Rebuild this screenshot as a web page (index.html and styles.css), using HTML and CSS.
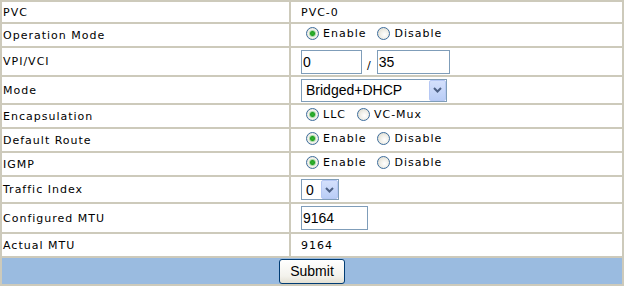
FILE: index.html
```html
<!DOCTYPE html>
<html lang="en">
<head>
  <meta charset="UTF-8">
  <title>PVC Settings</title>
  <link rel="stylesheet" href="styles.css">
</head>
<body>
  <form id="pvcForm">
    <table class="form-table">
      <colgroup>
        <col class="col-label">
        <col class="col-value">
      </colgroup>
      <tr class="row-text">
        <td class="label">PVC</td>
        <td class="value">PVC-0</td>
      </tr>
      <tr class="row-radio">
        <td class="label">Operation Mode</td>
        <td class="value">
          <label class="opt"><input type="radio" name="opmode" checked>Enable</label><label class="opt"><input type="radio" name="opmode">Disable</label>
        </td>
      </tr>
      <tr class="row-vpi">
        <td class="label">VPI/VCI</td>
        <td class="value">
          <input type="text" class="field vpi" value="0"><span class="sep">/</span><input type="text" class="field vci" value="35">
        </td>
      </tr>
      <tr class="row-mode">
        <td class="label">Mode</td>
        <td class="value">
          <span class="combo combo-mode">
            <select>
              <option selected>Bridged+DHCP</option>
              <option>Bridged</option>
              <option>Routed</option>
            </select>
            <span class="combo-btn"><svg width="9" height="6" viewBox="0 0 9 6"><path d="M1 1 L4.5 4.5 L8 1" fill="none" stroke="#4d6185" stroke-width="2"/></svg></span>
          </span>
        </td>
      </tr>
      <tr class="row-radio">
        <td class="label">Encapsulation</td>
        <td class="value">
          <label class="opt"><input type="radio" name="encap" checked>LLC</label><label class="opt"><input type="radio" name="encap">VC-Mux</label>
        </td>
      </tr>
      <tr class="row-radio">
        <td class="label">Default Route</td>
        <td class="value">
          <label class="opt"><input type="radio" name="route" checked>Enable</label><label class="opt"><input type="radio" name="route">Disable</label>
        </td>
      </tr>
      <tr class="row-radio">
        <td class="label">IGMP</td>
        <td class="value">
          <label class="opt"><input type="radio" name="igmp" checked>Enable</label><label class="opt"><input type="radio" name="igmp">Disable</label>
        </td>
      </tr>
      <tr class="row-traffic">
        <td class="label">Traffic Index</td>
        <td class="value">
          <span class="combo combo-traffic">
            <select>
              <option selected>0</option>
              <option>1</option>
              <option>2</option>
            </select>
            <span class="combo-btn"><svg width="9" height="6" viewBox="0 0 9 6"><path d="M1 1 L4.5 4.5 L8 1" fill="none" stroke="#4d6185" stroke-width="2"/></svg></span>
          </span>
        </td>
      </tr>
      <tr class="row-mtu">
        <td class="label">Configured MTU</td>
        <td class="value"><input type="text" class="field mtu" value="9164"></td>
      </tr>
      <tr class="row-actual">
        <td class="label">Actual MTU</td>
        <td class="value">9164</td>
      </tr>
      <tr class="row-submit">
        <td colspan="2" class="actions"><button type="submit">Submit</button></td>
      </tr>
    </table>
  </form>
</body>
</html>
```

FILE: styles.css
```css
body {
  margin: 0;
  background-color: #fff;
}
.form-table {
  width: 624px;
  table-layout: fixed;
  border-spacing: 2px;
  background-color: #cdcabb;
  font-family: "DejaVu Sans", Verdana, sans-serif;
  font-size: 11px;
  letter-spacing: 1px;
  color: #000;
}
.col-label {
  width: 287px;
}
.form-table td {
  background-color: #fff;
  padding: 0 0 0 1px;
  vertical-align: middle;
  white-space: nowrap;
}
.form-table td.value {
  padding-left: 10px;
}
.row-text td { height: 20px; }
.row-radio td { height: 22px; }
.row-vpi td { height: 27px; }
.row-mode td { height: 26px; }
.row-traffic td { height: 25px; }
.row-mtu td { height: 28px; }
.row-actual td { height: 22px; }
.row-submit td { height: 26px; }

.opt {
  display: inline-flex;
  align-items: center;
  margin-right: 6px;
}
.opt input {
  appearance: none;
  -webkit-appearance: none;
  width: 13px;
  height: 13px;
  margin: 0 4px 0 5px;
  border: 1px solid #3d6d9c;
  border-radius: 50%;
  background: radial-gradient(circle at 60% 60%, #ffffff 0, #f0efe8 45%, #d6d4c8 100%);
  box-sizing: border-box;
}
.opt input:checked {
  background: radial-gradient(circle, #32b432 0, #21a121 2px, #a8d9a8 3px, #f3f2ec 4px, #dcdad0 100%);
}

.field {
  box-sizing: border-box;
  height: 24px;
  margin: 0;
  padding: 0 1px;
  border: 1px solid #7f9db9;
  font-family: "Liberation Sans", Arial, sans-serif;
  font-size: 14px;
  letter-spacing: 0;
  vertical-align: middle;
}
.vpi { width: 61px; }
.vci { width: 73px; }
.mtu { width: 67px; }
.sep {
  margin: 0 5px;
  vertical-align: -4px;
}

.combo {
  position: relative;
  display: inline-block;
  vertical-align: middle;
}
.combo select {
  appearance: none;
  -webkit-appearance: none;
  box-sizing: border-box;
  width: 100%;
  height: 100%;
  margin: 0;
  padding: 0 0 0 4px;
  border: 1px solid #7f9db9;
  border-radius: 0;
  background-color: #fff;
  font-family: "Liberation Sans", Arial, sans-serif;
  font-size: 14px;
  letter-spacing: 0;
  color: #000;
}
.combo-mode {
  width: 146px;
  height: 23px;
}
.combo-traffic {
  width: 38px;
  height: 21px;
}
.combo-btn {
  position: absolute;
  top: 1px;
  right: 1px;
  bottom: 1px;
  width: 17px;
  display: flex;
  align-items: center;
  justify-content: center;
  box-sizing: border-box;
  border: 1px solid #b6c8f4;
  border-radius: 2px;
  background: linear-gradient(#d4e0fc, #b9cdf6);
  pointer-events: none;
}

.actions {
  text-align: center;
}
.form-table .row-submit td {
  background-color: #9abbe0;
  padding: 0;
}
button {
  width: 66px;
  height: 25px;
  margin: 0;
  padding: 0;
  border: 1px solid #003c74;
  border-radius: 3px;
  background: linear-gradient(#ffffff, #f3f2ec 70%, #e3e0d3);
  font-family: "Liberation Sans", Arial, sans-serif;
  font-size: 14px;
  letter-spacing: 0;
  color: #000;
  vertical-align: middle;
  cursor: pointer;
}
```
